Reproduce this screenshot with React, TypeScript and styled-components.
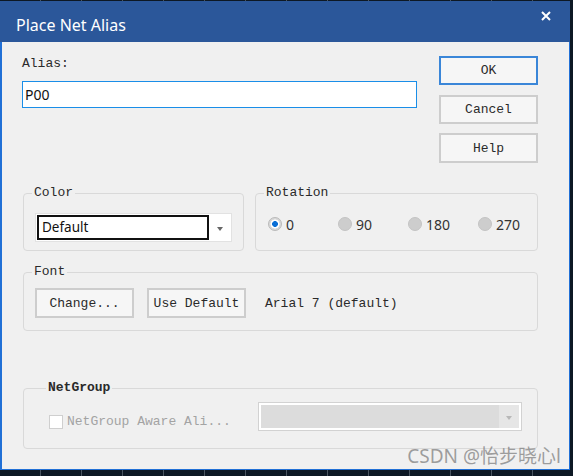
import React from "react";
import styled, { createGlobalStyle } from "styled-components";

const Global = createGlobalStyle`
  html, body { margin: 0; padding: 0; background: #0d1824; }
  * { box-sizing: border-box; }
`;

const MONO = `"Liberation Mono", "DejaVu Sans Mono", monospace`;
const SANS = `"Noto Sans", "Open Sans", Arial, sans-serif`;

const Page = styled.div`
  width: 573px;
  height: 476px;
  overflow: hidden;
  background-color: #0d1824;
  background-image: repeating-linear-gradient(
    90deg,
    transparent 0 40px,
    #4a5560 40px 41px
  );
`;

const Window = styled.div`
  position: relative;
  margin-top: 1px;
  width: 570px;
  height: 469px;
  display: flex;
  flex-direction: column;
`;

const TitleBar = styled.div`
  height: 41px;
  flex: none;
  background: #2b579a;
  display: flex;
  justify-content: space-between;
  align-items: flex-start;
  padding: 0 19px 0 16px;
`;

const Title = styled.span`
  margin-top: 13px;
  font-family: ${SANS};
  font-size: 16px;
  line-height: 22px;
  color: #ffffff;
`;

const CloseBtn = styled.span`
  margin-top: 10px;
  width: 10px;
  height: 10px;
  display: flex;
`;

const Body = styled.div`
  flex: 1;
  background: #f0f0f0;
  border-left: 2px solid #2170d6;
  border-right: 1px solid #2170d6;
  border-bottom: 1px solid #2170d6;
  padding: 14px 31px 0 20px;
  display: flex;
  flex-direction: column;
`;

const TopRow = styled.div`
  display: flex;
  justify-content: space-between;
  height: 107px;
`;

const AliasCol = styled.div`
  width: 395px;
  display: flex;
  flex-direction: column;
  gap: 9px;
`;

const Label = styled.span<{ $disabled?: boolean }>`
  font-family: ${MONO};
  font-size: 13px;
  line-height: 16px;
  color: ${(p) => (p.$disabled ? "#a3a3a3" : "#2a2a2a")};
  white-space: nowrap;
`;

const TextInput = styled.div`
  height: 27px;
  border: 1px solid #1a8ee8;
  background: #ffffff;
  font-family: ${SANS};
  font-size: 14px;
  line-height: 25px;
  padding-left: 2px;
  color: #111;
`;

const ButtonCol = styled.div`
  width: 99px;
  display: flex;
  flex-direction: column;
`;

const Button = styled.div<{ $primary?: boolean; $gap?: number; $h?: number }>`
  width: 99px;
  height: ${(p) => p.$h ?? 29}px;
  margin-top: ${(p) => p.$gap ?? 0}px;
  border: ${(p) => (p.$primary ? "2px solid #3a86d8" : "2px solid #cdcdcd")};
  background: #f6f6f6;
  display: flex;
  align-items: center;
  justify-content: center;
  font-family: ${MONO};
  font-size: 13px;
  color: #2a2a2a;
  flex: none;
`;

const Groups = styled.div`
  padding-left: 1px;
  display: flex;
  flex-direction: column;
`;

const GroupRow = styled.div`
  display: flex;
  gap: 11px;
  margin-top: 23px;
`;

const Group = styled.fieldset<{ $w?: number; $pt: number; $pb: number; $mt?: number; $pl?: number; $pr?: number }>`
  margin: ${(p) => p.$mt ?? 0}px 0 0 0;
  width: ${(p) => (p.$w ? `${p.$w}px` : "auto")};
  min-width: 0;
  border: 1px solid #d9d9d9;
  border-radius: 4px;
  padding: ${(p) => p.$pt}px ${(p) => p.$pr ?? 11}px ${(p) => p.$pb}px ${(p) => p.$pl ?? 11}px;
  display: flex;
  align-items: flex-start;
`;

const Legend = styled.legend<{ $bold?: boolean }>`
  font-family: ${MONO};
  font-size: 13px;
  line-height: 14px;
  font-weight: ${(p) => (p.$bold ? 700 : 400)};
  color: #2a2a2a;
  padding: 0 2px;
  margin-left: -3px;
`;

const Combo = styled.div`
  width: 197px;
  height: 29px;
  border: 1px solid #e2e2e2;
  background: #ffffff;
  display: flex;
  align-items: center;
  padding-left: 1px;
`;

const ComboText = styled.div`
  width: 173px;
  height: 25px;
  border: 2px solid #111;
  font-family: ${SANS};
  font-size: 13.5px;
  line-height: 21px;
  padding-left: 3px;
  color: #111;
`;

const ArrowBox = styled.div<{ $w: number; $bg: string }>`
  width: ${(p) => p.$w}px;
  align-self: stretch;
  background: ${(p) => p.$bg};
  display: flex;
  align-items: center;
  justify-content: center;
`;

const Arrow = styled.span<{ $c: string }>`
  width: 0;
  height: 0;
  border-left: 3px solid transparent;
  border-right: 3px solid transparent;
  border-top: 4px solid ${(p) => p.$c};
  margin-top: 2px;
`;

const RadioRow = styled.div`
  display: grid;
  grid-template-columns: repeat(4, 70px);
  height: 22px;
  margin-left: 1px;
`;

const RadioItem = styled.div`
  display: flex;
  align-items: center;
  gap: 4px;
  font-family: ${SANS};
  font-size: 14px;
  color: #333;
`;

const RadioDot = styled.span<{ $on?: boolean }>`
  width: 14px;
  height: 14px;
  border-radius: 50%;
  border: 1px solid ${(p) => (p.$on ? "#b9b9b9" : "#c4c4c4")};
  background: ${(p) =>
    p.$on
      ? "radial-gradient(circle, #0a6fd6 0 2.6px, #ffffff 3.2px 4.2px, #d8d8d8 4.8px)"
      : "#cdcdcd"};
  flex: none;
`;

const FontRow = styled.div`
  display: flex;
  align-items: center;
  gap: 13px;
`;

const FontText = styled.span`
  margin-left: 6px;
  font-family: ${MONO};
  font-size: 13px;
  color: #2a2a2a;
`;

const NetRow = styled.div`
  flex: 1;
  height: 29px;
  display: flex;
  align-items: center;
  justify-content: space-between;
`;

const CheckWrap = styled.div`
  display: flex;
  align-items: center;
  gap: 4px;
  margin-top: 10px;
`;

const CheckBox = styled.span`
  width: 14px;
  height: 14px;
  border: 1px solid #cfcfcf;
  background: #ffffff;
`;

const DisabledCombo = styled.div`
  width: 264px;
  height: 29px;
  border: 1px solid #d2d2d2;
  background: #ffffff;
  padding: 2px;
  display: flex;
`;

const DisabledField = styled.div`
  flex: 1;
  background: #dcdcdc;
`;

const Watermark = styled.div`
  position: absolute;
  right: 9px;
  bottom: 2px;
  font-family: ${SANS}, "Noto Sans CJK SC", sans-serif;
  font-size: 19px;
  line-height: 24px;
  color: rgba(128, 128, 128, 0.75);
`;

export default function App() {
  return (
    <>
      <Global />
      <Page>
        <Window>
          <TitleBar>
            <Title>Place Net Alias</Title>
            <CloseBtn>
              <svg width="10" height="10" viewBox="0 0 10 10">
                <path d="M1 1 L9 9 M9 1 L1 9" stroke="#ffffff" strokeWidth="2" />
              </svg>
            </CloseBtn>
          </TitleBar>
          <Body>
            <TopRow>
              <AliasCol>
                <Label>Alias:</Label>
                <TextInput>P00</TextInput>
              </AliasCol>
              <ButtonCol>
                <Button $primary>OK</Button>
                <Button $gap={10}>Cancel</Button>
                <Button $gap={9} $h={30}>Help</Button>
              </ButtonCol>
            </TopRow>
            <Groups>
              <GroupRow>
                <Group $w={221} $pt={13} $pb={8}>
                  <Legend>Color</Legend>
                  <Combo>
                    <ComboText>Default</ComboText>
                    <ArrowBox $w={22} $bg="#ffffff">
                      <Arrow $c="#666" />
                    </ArrowBox>
                  </Combo>
                </Group>
                <Group $w={283} $pt={13} $pb={8}>
                  <Legend>Rotation</Legend>
                  <RadioRow>
                    <RadioItem><RadioDot $on />0</RadioItem>
                    <RadioItem><RadioDot />90</RadioItem>
                    <RadioItem><RadioDot />180</RadioItem>
                    <RadioItem><RadioDot />270</RadioItem>
                  </RadioRow>
                </Group>
              </GroupRow>
              <Group $mt={14} $pt={9} $pb={12}>
                <Legend>Font</Legend>
                <FontRow>
                  <Button $h={30}>Change...</Button>
                  <Button $h={30}>Use Default</Button>
                  <FontText>Arial 7 (default)</FontText>
                </FontRow>
              </Group>
              <Group $mt={50} $pt={7} $pb={17} $pl={25} $pr={15}>
                <Legend $bold>NetGroup</Legend>
                <NetRow>
                  <CheckWrap>
                    <CheckBox />
                    <Label $disabled>NetGroup Aware Ali...</Label>
                  </CheckWrap>
                  <DisabledCombo>
                    <DisabledField />
                    <ArrowBox $w={20} $bg="#e6e6e6">
                      <Arrow $c="#b8b8b8" />
                    </ArrowBox>
                  </DisabledCombo>
                </NetRow>
              </Group>
            </Groups>
          </Body>
          <Watermark>CSDN @怡步晓心l</Watermark>
        </Window>
      </Page>
    </>
  );
}
